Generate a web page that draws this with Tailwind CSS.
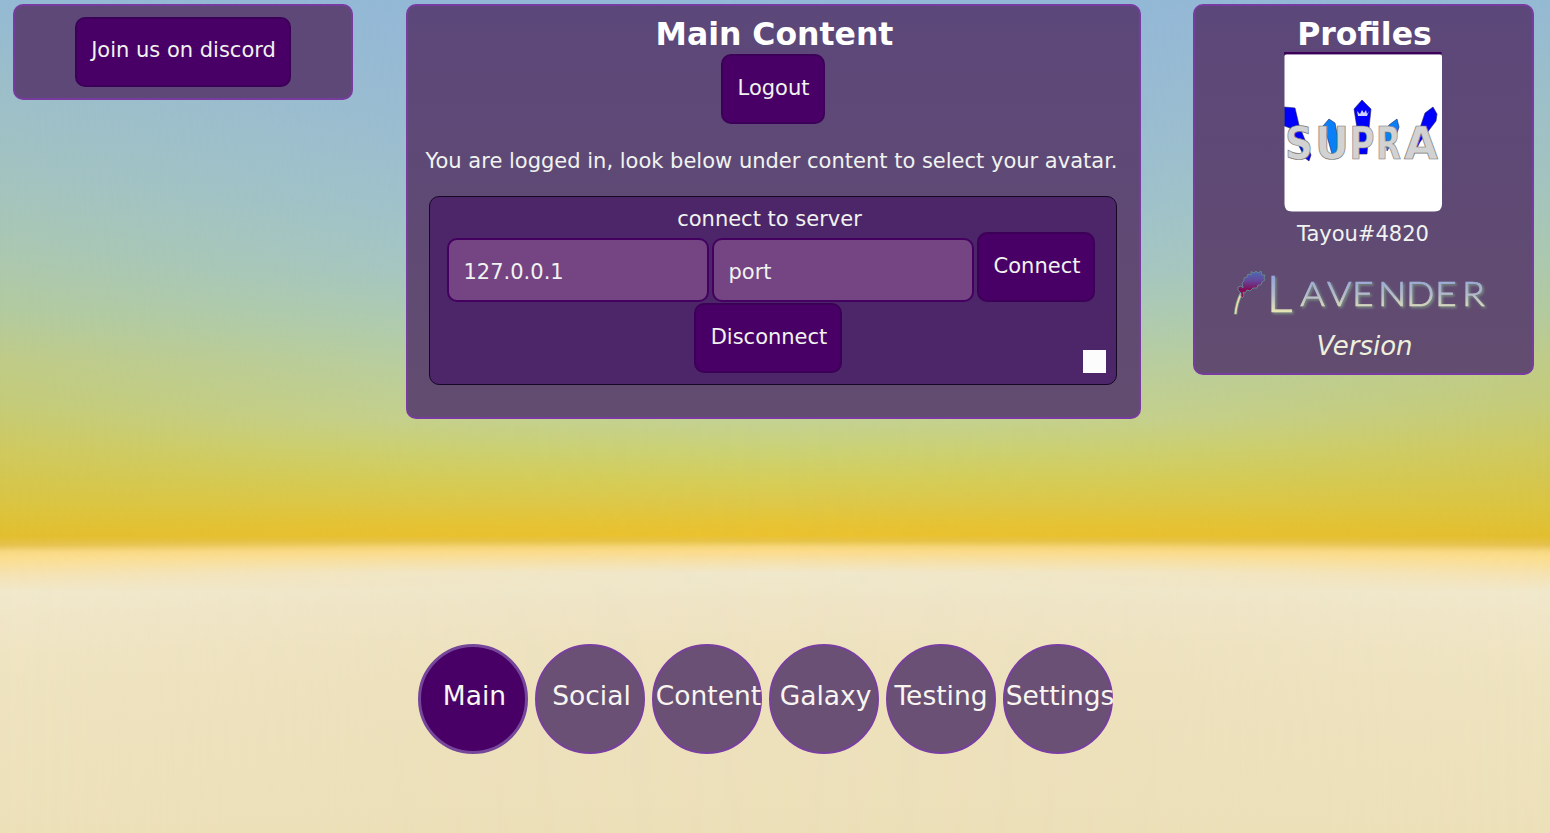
<!DOCTYPE html>
<html lang="en">
<head>
<meta charset="utf-8">
<title>Lavender</title>
<script src="https://cdn.jsdelivr.net/npm/@tailwindcss/browser@4"></script>
</head>
<body class="relative h-[833px] w-[1550px] overflow-hidden font-['DejaVu_Sans',sans-serif] text-[21px] leading-6 text-[#f1f3f0] bg-[linear-gradient(180deg,#93b8d8_0px,#98bbd5_110px,#9dc1d0_200px,#a3c6c8_270px,#aeccb4_330px,#bdd09d_390px,#c4d294_420px,#cbd276_450px,#d5ce5a_480px,#dec849_504px,#e6c436_522px,#ebc22f_535px,#e7c449_541px,#f7d77c_547px,#fcdc89_551px,#f6e1ab_561px,#f0e8cc_573px,#efe5c6_600px,#eee2bf_650px,#ece0b9_833px)]">
<!-- warmer sky towards both sides -->
<div class="absolute inset-0 bg-[linear-gradient(180deg,#94b9d3_0px,#9dbfc8_100px,#a3c3bf_180px,#aac7b1_250px,#b2ca9f_310px,#bfcb87_360px,#c4cb78_405px,#cfc95f_450px,#d4c64f_480px,#dbc43f_508px,#e2be2f_536px,#e5c24e_545px,#f8d883_552px,#fbdd8c_557px,#f5e2b2_575px,#f0e8cc_592px,#f0e6c8_610px,#eee3bf_680px,#ece0b9_833px)] [mask-image:linear-gradient(90deg,#000_0px,rgb(0_0_0/0.25)_400px,transparent_775px,rgb(0_0_0/0.25)_1150px,#000_1550px)]"></div>

<main class="relative flex h-[643px] items-start pt-1 pl-[13px]">
  <section class="flex h-24 w-[340px] items-start justify-center rounded-[10px] border-2 border-[#783b9f] bg-[#5d4877] pt-[11px]">
    <button class="h-[70px] w-[216px] rounded-[10px] border-2 border-[#3d0058] bg-[#480066] pb-1 pl-px whitespace-nowrap">Join us on discord</button>
  </section>

  <section class="ml-[53px] flex h-[415px] w-[735px] flex-col items-center rounded-[10px] border-2 border-[#783b9f] bg-linear-to-b from-[#5c477a] to-[#624c6f] pt-2 pr-[2px]">
    <h1 class="h-10 pl-1 text-[31.500px] leading-10 font-bold text-white">Main Content</h1>
    <button class="mt-0 h-[70px] w-[104px] rounded-[10px] border-2 border-[#3d0058] bg-[#480066] pb-[3px] pl-0.5">Logout</button>
    <p class="mt-[25px] pr-[2px] whitespace-nowrap">You are logged in, look below under content to select your avatar.</p>
    <div class="mt-[23px] flex h-[189px] w-[688px] flex-col rounded-[10px] border border-[#150825] bg-[#4d2669] pt-[10px]">
      <h2 class="pr-[6px] text-center">connect to server</h2>
      <div class="mt-px flex h-[70px] items-end pl-[17px]">
        <div class="flex h-16 w-[262px] items-center rounded-[10px] border-2 border-[#430060] bg-[#754483] pt-[3px] pl-[15px]">127.0.0.1</div>
        <div class="ml-[3px] flex h-16 w-[262px] items-center rounded-[10px] border-2 border-[#430060] bg-[#754483] pt-[3px] pl-[15px]">port</div>
        <button class="ml-[3px] h-[70px] w-[118px] rounded-[10px] border-2 border-[#3d0058] bg-[#480066] pb-[3px] pl-[3px]">Connect</button>
      </div>
      <div class="flex items-end justify-between pt-px pr-[10px] pl-[264px]">
        <button class="h-[70px] w-[148px] rounded-[10px] border-2 border-[#3d0058] bg-[#480066] pb-[3px] pl-[3px]">Disconnect</button>
        <span class="h-[23px] w-[23px] bg-[#fdfcfd]"></span>
      </div>
    </div>
  </section>

  <section class="ml-[52px] flex h-[371px] w-[341px] flex-col items-center rounded-[10px] border-2 border-[#783b9f] bg-linear-to-b from-[#5c477a] to-[#624c6f] pt-2">
    <h1 class="h-[38px] pl-0.5 text-[31.500px] leading-10 font-bold text-white">Profiles</h1>
    <svg class="mr-[1px] block h-[160px] w-[158px]" viewBox="0 0 158 160">
      <rect width="157.500" height="2.5" y="0" fill="#3d0058"/>
      <path d="M.5 4.500Q.5 2.500 2.500 2.500H156Q158 2.500 158 4.500V152Q158 159.500 150.500 159.500H8Q.5 159.500 .5 152Z" fill="#fff"/>
      <g stroke="#22226a" stroke-width=".6">
        <path d="M.5 55 11 56 15 73 27 103 25 109 21 106 6 76 .5 74Z" fill="#0000fb"/>
        <path d="M39 74 45 67 51 71 57 102 48 102 43 84Z" fill="#0a80f8"/>
        <path d="M70 57 78 48 87 57 85 76 83 102 74 102 73 76Z" fill="#0000fb"/>
        <path d="M101 79 105 73 113 67 115 75 112 84 103 99Z" fill="#0a80f8"/>
        <path d="M141 61 149 55 153 62 152 69 136 90 128 106 128 89 136 76Z" fill="#0000fb"/>
      </g>
      <path d="M73 59 76 62 78 58 80 61 82 58 83 62 85 59 83 64 74 64Z" fill="#ccd4ff"/>
      <g font-family="DejaVu Sans, sans-serif" font-weight="bold" font-size="44" fill="#d2d2d2" stroke="#777" stroke-width=".7">
        <text x="1" y="107" textLength="28" lengthAdjust="spacingAndGlyphs">S</text>
        <text x="31" y="107" textLength="34" lengthAdjust="spacingAndGlyphs">U</text>
        <text x="65.500" y="107" textLength="25" lengthAdjust="spacingAndGlyphs">P</text>
        <text x="92" y="107" textLength="25" lengthAdjust="spacingAndGlyphs">R</text>
        <text x="120" y="107" textLength="34" lengthAdjust="spacingAndGlyphs">A</text>
      </g>
    </svg>
    <p class="mt-[10px] pr-px">Tayou#4820</p>
    <svg class="mt-[19px] block h-[60px] w-[270px] overflow-visible" viewBox="0 0 270 60">
      <defs>
        <linearGradient id="letters" gradientUnits="userSpaceOnUse" x1="0" y1="10" x2="0" y2="48">
          <stop offset="0" stop-color="#91a5dc"/><stop offset=".5" stop-color="#b3bacd"/><stop offset="1" stop-color="#ebe8b4"/>
        </linearGradient>
        <linearGradient id="flower" x1="0" y1="0" x2="0" y2="1">
          <stop offset="0" stop-color="#4c6cb4"/><stop offset=".35" stop-color="#64489c"/><stop offset=".7" stop-color="#830c57"/>
        </linearGradient>
        <filter id="soft" x="-10%" y="-20%" width="120%" height="150%"><feDropShadow dx="1.500" dy="1.500" stdDeviation="1.200" flood-color="#7d9c84" flood-opacity=".9"/></filter>
      </defs>
      <path d="M6.500 49.500C7 42 9 35 12.500 28" fill="none" stroke="#728d82" stroke-width="3.500"/>
      <path d="M6.500 49C7 42 9 35 12.500 28" fill="none" stroke="#e9d9ad" stroke-width="1.800"/>
      <path d="M12 28 9 25 9 22 12 21 14 23 13 18 15 16 15 13 18 12 19 9 22 10 22 6.500 25 8 27 6 29 8 32 6 33 10 36 10 35 13 36 15 33 17 32 20 29 20 28 23 24 23 21 26 18 25 16 28 14 27 15 31 13 33 12 31Z" fill="url(#flower)" stroke="#66828e" stroke-width="1"/>
      <g font-family="Lato, sans-serif" font-weight="300" fill="url(#letters)" stroke="url(#letters)" stroke-width=".7" filter="url(#soft)">
        <text x="37.500" y="46.500" font-size="51" textLength="26" lengthAdjust="spacingAndGlyphs">L</text>
        <!-- drawn slightly wider than the face's own proportions -->
        <g transform="scale(1.100 1)">
          <text y="41.500" font-size="34" x="64.700 89 111.800 135.500 161 187.300 211.800">AVENDER</text>
        </g>
      </g>
    </svg>
    <p class="mt-[5px] pl-0.5 text-[26px] leading-8 text-[#eef0dc] italic">Version</p>
  </section>
</main>

<nav class="relative flex gap-[7px] pt-[0.500px] pl-[418px] text-[26.500px] leading-8 whitespace-nowrap text-[#f8f5f1]">
  <a class="flex h-[110px] w-[110px] items-center justify-center rounded-full border-[3px] border-[#75469a] bg-[#480066] pb-1.5 pl-[3px]">Main</a>
  <a class="flex h-[110px] w-[110px] items-center justify-center rounded-full border-2 border-[#793fa0] bg-[#6a5075] pb-1.5 pl-[3px]">Social</a>
  <a class="flex h-[110px] w-[110px] items-center justify-center rounded-full border-2 border-[#793fa0] bg-[#6a5075] pb-1.5 pl-[3px]">Content</a>
  <a class="flex h-[110px] w-[110px] items-center justify-center rounded-full border-2 border-[#793fa0] bg-[#6a5075] pb-1.5 pl-[3px]">Galaxy</a>
  <a class="flex h-[110px] w-[110px] items-center justify-center rounded-full border-2 border-[#793fa0] bg-[#6a5075] pb-1.5">Testing</a>
  <a class="flex h-[110px] w-[110px] items-center justify-center rounded-full border-2 border-[#793fa0] bg-[#6a5075] pb-1.5 pl-1">Settings</a>
</nav>
</body>
</html>
